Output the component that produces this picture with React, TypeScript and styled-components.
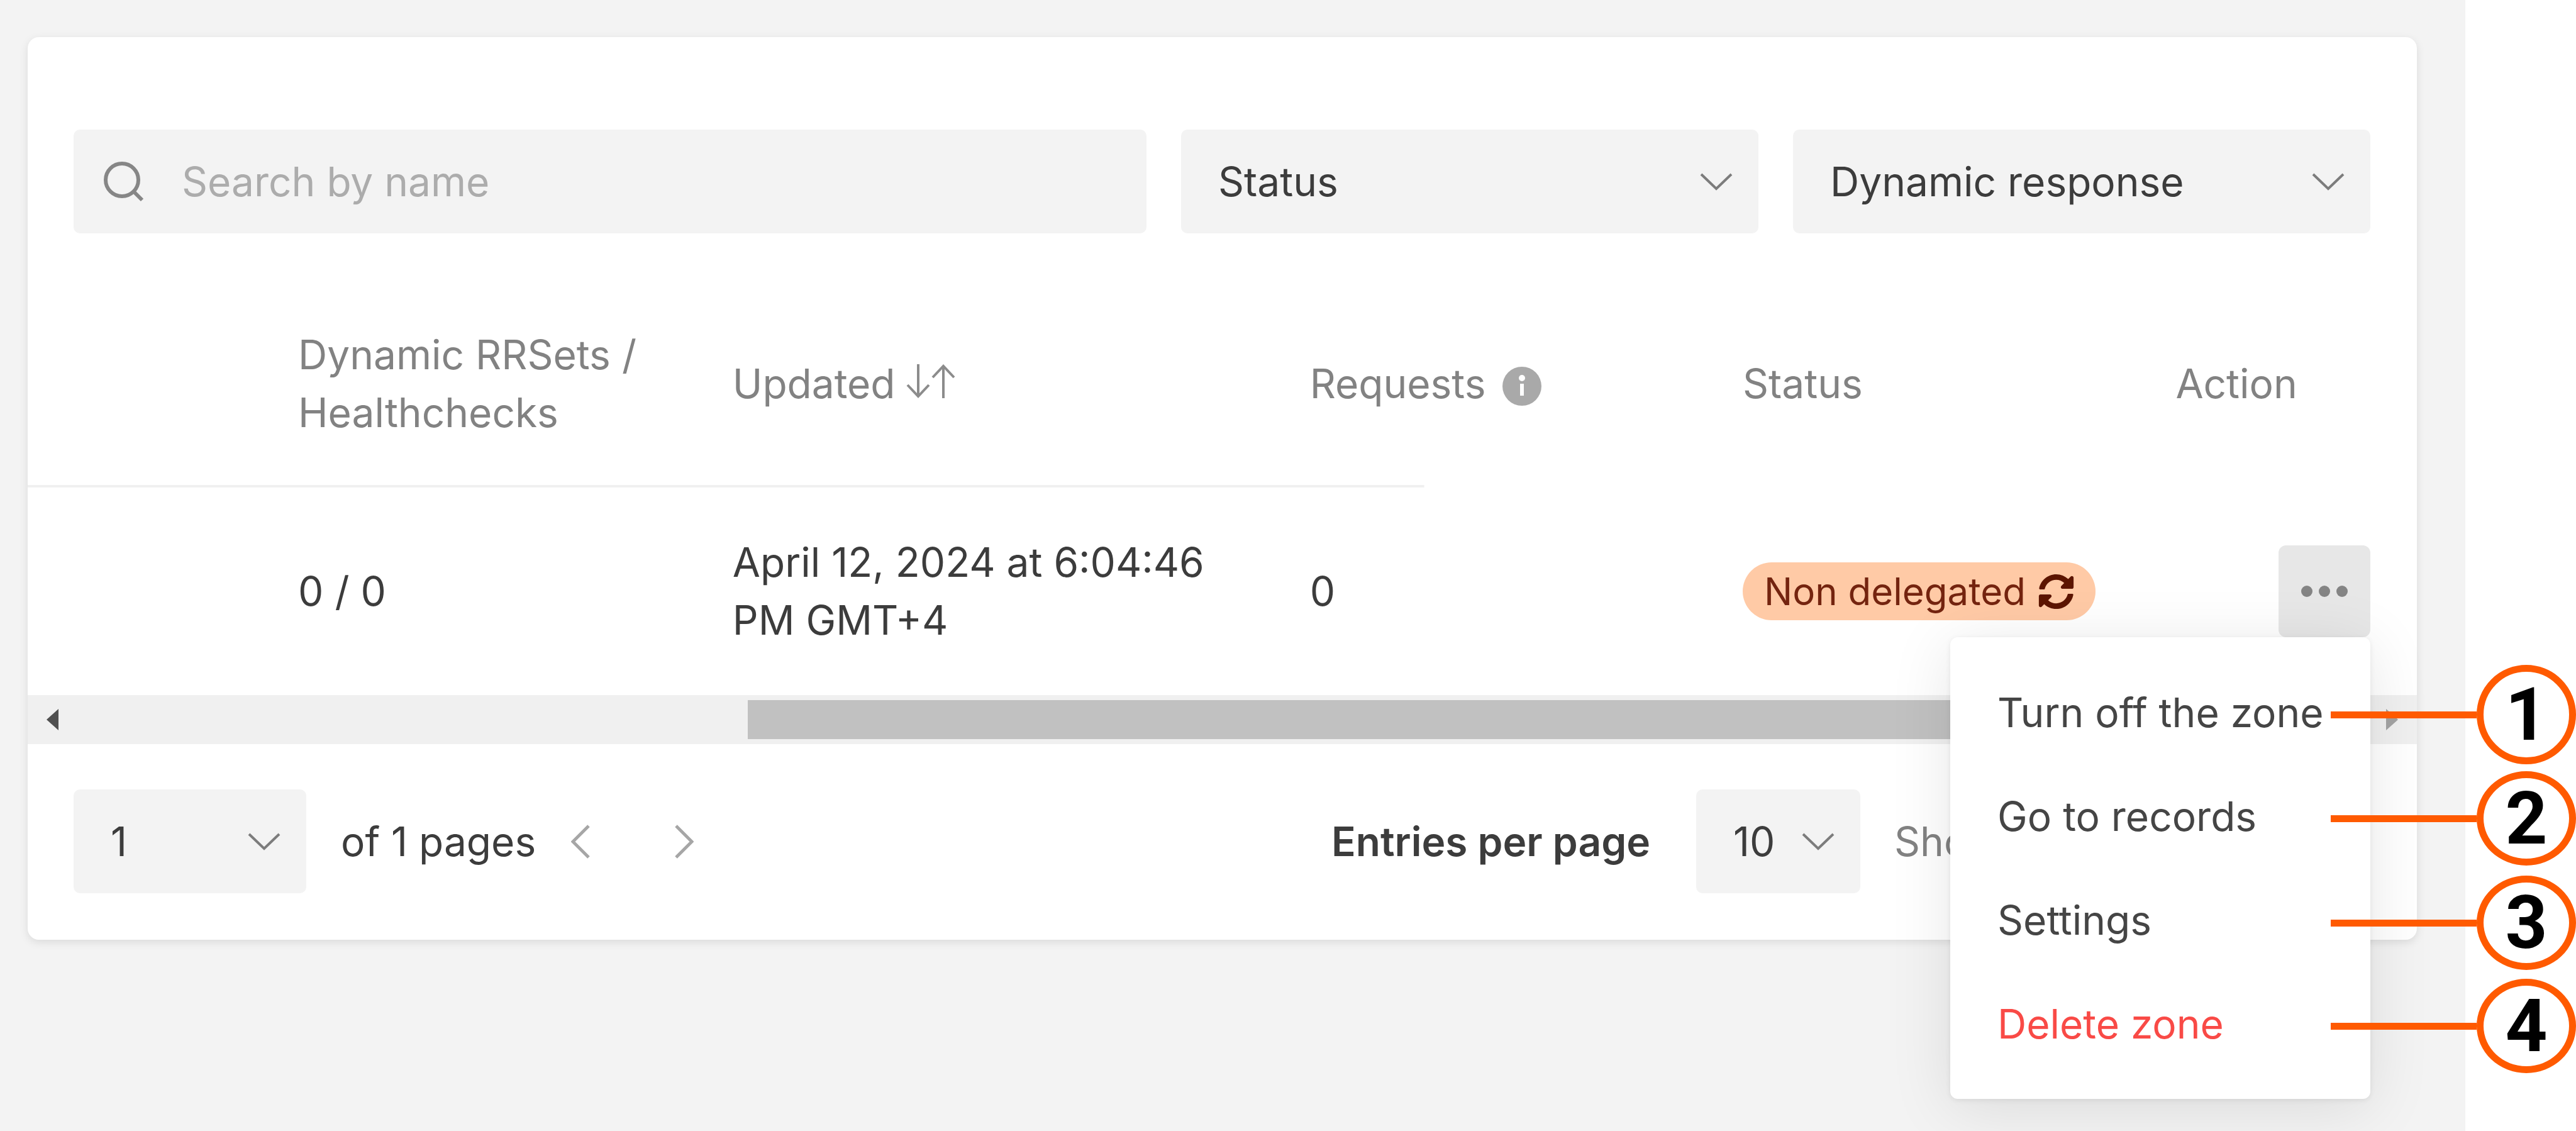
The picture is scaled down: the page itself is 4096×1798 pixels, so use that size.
import React from "react";
import styled, { createGlobalStyle, css } from "styled-components";

const GlobalStyle = createGlobalStyle`
  *, *::before, *::after { box-sizing: border-box; }
  body { margin: 0; background: #fff; }
  body, button, input, select {
    font-family: Inter, "Liberation Sans", sans-serif;
    font-size: 64px;
    line-height: 92px;
    color: #3c3c3c;
  }
`;

const Page = styled.div`
  position: relative;
  min-height: 100vh;
  padding-right: 176px;
  overflow: hidden;
`;

const Workspace = styled.main`
  min-height: 100vh;
  padding: 59px 77px 59px 44px;
  background: #f3f3f3;
`;

const Card = styled.section`
  background: #fff;
  border-radius: 18px;
  box-shadow: 0 4px 14px rgba(0, 0, 0, 0.1);
`;

const Filters = styled.form`
  display: flex;
  gap: 55px;
  padding: 147px 74px 74px 73px;
`;

const SearchBox = styled.label`
  display: flex;
  flex: 1;
  align-items: center;
  gap: 60px;
  height: 165px;
  padding: 0 48px;
  border-radius: 10px;
  background: #f3f3f3;
`;

const SearchInput = styled.input`
  flex: 1;
  min-width: 0;
  padding: 0;
  border: 0;
  outline: 0;
  background: transparent;
  &::placeholder { color: #acacac; opacity: 1; }
`;

const SelectBox = styled.div<{ $width: number }>`
  display: grid;
  flex: none;
  align-items: center;
  width: ${(p) => p.$width}px;
  height: 165px;
  border-radius: 10px;
  background: #f3f3f3;
  & > * { grid-area: 1 / 1; }
`;

const Select = styled.select`
  width: 100%;
  height: 100%;
  padding: 0 0 0 59px;
  border: 0;
  border-radius: 10px;
  appearance: none;
  background: transparent;
`;

const SelectArrow = styled.svg`
  justify-self: end;
  width: 52px;
  height: 28px;
  margin-right: 41px;
  pointer-events: none;
`;

const Table = styled.table`
  width: 100%;
  border-collapse: collapse;
  table-layout: fixed;
`;

const Column = styled.col<{ $share: string }>`
  width: ${(p) => p.$share};
`;

const HeadRow = styled.tr`
  height: 330px;
  background: linear-gradient(#f0f0f0, #f0f0f0) left bottom / 58.44% 4px no-repeat;
`;

const BodyRow = styled.tr`
  height: 330px;
`;

const cell = css<{ $first?: boolean }>`
  padding: 0 0 0 ${(p) => (p.$first ? 430 : 70)}px;
  text-align: left;
  vertical-align: middle;
`;

const HeadCell = styled.th<{ $first?: boolean }>`
  ${cell}
  color: #828282;
  font-weight: 400;
`;

const Cell = styled.td<{ $first?: boolean }>`
  ${cell}
`;

const ActionCell = styled(Cell)`
  padding-right: 74px;
`;

const HeadLabel = styled.span<{ $gap: number }>`
  display: flex;
  align-items: center;
  gap: ${(p) => p.$gap}px;
`;

const SortButton = styled.button`
  display: flex;
  padding: 0 0 8px;
  border: 0;
  background: none;
`;

const InfoMark = styled.svg`
  width: 64px;
  height: 64px;
  margin-top: 8px;
`;

const Badge = styled.span`
  display: flex;
  align-items: center;
  gap: 20px;
  width: max-content;
  height: 92px;
  padding: 0 34px;
  border-radius: 46px;
  background: #ffcaa6;
  color: #74240f;
  font-size: 60px;
`;

const ActionMenu = styled.div`
  position: relative;
  width: 146px;
  margin-left: auto;
`;

const MoreButton = styled.button`
  display: flex;
  align-items: center;
  justify-content: center;
  width: 146px;
  height: 146px;
  padding: 0;
  border: 0;
  border-radius: 12px;
  background: #e7e7e7;
`;

const Menu = styled.div`
  position: absolute;
  z-index: 2;
  top: 100%;
  right: 0;
  display: flex;
  flex-direction: column;
  width: 668px;
  padding: 37px 0;
  border-radius: 12px;
  background: #fff;
  box-shadow: 0 14px 100px rgba(0, 0, 0, 0.1), 0 2px 8px rgba(0, 0, 0, 0.08);
`;

const MenuItem = styled.button<{ $danger?: boolean }>`
  height: 165px;
  padding: 0 0 0 75px;
  border: 0;
  background: none;
  color: ${(p) => (p.$danger ? "#f94a46" : "#454545")};
  text-align: left;
  white-space: nowrap;
`;

const ScrollBar = styled.div`
  display: flex;
  align-items: center;
  justify-content: space-between;
  height: 78px;
  padding: 0 30px;
  background: #f0f0f0;
`;

const ScrollTrack = styled.div`
  display: flex;
  flex: 1;
  justify-content: flex-end;
  margin: 0 36px;
`;

const ScrollThumb = styled.div`
  width: 70.8%;
  height: 62px;
  background: #c1c1c1;
`;

const Pager = styled.footer`
  display: flex;
  align-items: center;
  padding: 72px 74px 74px 73px;
`;

const PageCount = styled.span`
  margin-left: 55px;
  white-space: nowrap;
`;

const PageArrows = styled.span`
  display: flex;
  gap: 135px;
  margin-left: 56px;
`;

const ArrowButton = styled.button`
  display: flex;
  padding: 0;
  border: 0;
  background: none;
`;

const EntriesLabel = styled.label`
  margin: 0 73px 0 auto;
  font-weight: 600;
  white-space: nowrap;
`;

const Summary = styled.span`
  flex: none;
  width: 757px;
  margin-left: 54px;
  color: #828282;
  white-space: nowrap;
`;

const Callout = styled.div<{ $top: number; $height: number }>`
  position: absolute;
  z-index: 3;
  top: ${(p) => p.$top}px;
  right: 0;
  display: flex;
  align-items: center;
  height: ${(p) => p.$height}px;
`;

const Leader = styled.span`
  width: 232px;
  height: 11px;
  background: #ff5a00;
`;

const Marker = styled.span`
  display: flex;
  align-items: center;
  justify-content: center;
  width: 158px;
  height: 100%;
  border: 11px solid #ff5a00;
  border-radius: 50%;
  background: #fff;
  color: #000;
  font: 700 117px/1 Roboto, "Liberation Sans", sans-serif;
`;

const SearchIcon = () => (
  <svg width="64" height="64" viewBox="0 0 64 64" fill="none" stroke="#868686" strokeWidth="6">
    <circle cx="29" cy="29" r="26" />
    <path d="M47 47 61 61" />
  </svg>
);

const SortIcon = () => (
  <svg width="80" height="54" viewBox="0 0 80 54" fill="none" stroke="#8c8c8c" strokeWidth="4">
    <path d="M20 0V50M3 33 20 51 37 33M60 54V4M43 21 60 3 77 21" />
  </svg>
);

const InfoIcon = () => (
  <InfoMark viewBox="0 0 64 64">
    <circle cx="32" cy="32" r="31" fill="#a9a9a9" />
    <circle cx="32" cy="19" r="5" fill="#fff" />
    <rect x="29" y="28" width="6" height="19" fill="#fff" />
  </InfoMark>
);

const SyncIcon = () => (
  <svg width="57" height="57" viewBox="0 0 512 512" fill="#5c1500">
    <path d="M370.7 133.3C339.5 104 298.9 88 255.8 88c-77.5.1-144.3 53.2-162.8 126.9-1.3 5.4-6.1 9.1-11.7 9.1H24.1c-7.5 0-13.2-6.8-11.8-14.2C33.9 94.9 134.8 8 256 8c66.4 0 126.8 26.1 171.3 68.7L463 41c15.1-15.1 41-4.4 41 17v134c0 13.3-10.7 24-24 24H346c-21.4 0-32.1-25.9-17-41l41.7-41.7zM32 296h134c21.4 0 32.1 25.9 17 41l-41.8 41.8c31.3 29.3 71.8 45.3 114.9 45.2 77.4-.1 144.3-53.1 162.8-126.8 1.3-5.4 6.1-9.1 11.7-9.1h57.3c7.5 0 13.2 6.8 11.8 14.2C478.1 417.1 377.2 504 256 504c-66.4 0-126.8-26.1-171.3-68.7L49 471c-15.1 15.1-41 4.4-41-17V320c0-13.3 10.7-24 24-24z" />
  </svg>
);

const MoreIcon = () => (
  <svg width="76" height="20" viewBox="0 0 76 20" fill="#848484">
    <circle cx="10" cy="10" r="9" />
    <circle cx="38" cy="10" r="9" />
    <circle cx="66" cy="10" r="9" />
  </svg>
);

const Chevron = () => (
  <SelectArrow viewBox="0 0 52 28" fill="none" stroke="#7c7c7c" strokeWidth="4">
    <path d="M2 2 26 25 50 2" />
  </SelectArrow>
);

const PageArrow = ({ forward }: { forward?: boolean }) => (
  <svg width="30" height="54" viewBox="0 0 30 54" fill="none" stroke="#a6a6a6" strokeWidth="5">
    <path d={forward ? "M2 2 27 27 2 52" : "M28 2 3 27 28 52"} />
  </svg>
);

const ScrollArrow = ({ forward }: { forward?: boolean }) => (
  <svg width="19" height="34" viewBox="0 0 19 34">
    <path d={forward ? "M0 0 19 17 0 34Z" : "M19 0 0 17 19 34Z"} fill={forward ? "#a3a3a3" : "#505050"} />
  </svg>
);

type DropDownProps = { id: string; label?: string; value: string; width: number };

const DropDown = ({ id, label, value, width }: DropDownProps) => (
  <SelectBox $width={width}>
    <Select id={id} aria-label={label} defaultValue={value}>
      <option>{value}</option>
    </Select>
    <Chevron />
  </SelectBox>
);

const callouts = [
  { number: 1, top: 1057, height: 158 },
  { number: 2, top: 1226, height: 150 },
  { number: 3, top: 1392, height: 150 },
  { number: 4, top: 1556, height: 150 },
];

export default function App() {
  return (
    <Page>
      <GlobalStyle />
      <Workspace>
        <Card>
          <Filters>
            <SearchBox htmlFor="search">
              <SearchIcon />
              <SearchInput id="search" type="text" aria-label="Search by name" placeholder="Search by name" />
            </SearchBox>
            <DropDown id="status" label="Status" value="Status" width={918} />
            <DropDown id="response" label="Dynamic response" value="Dynamic response" width={918} />
          </Filters>
          <Table>
            <colgroup>
              <Column $share="27.66%" />
              <Column $share="24.16%" />
              <Column $share="18.12%" />
              <Column $share="18.12%" />
              <Column $share="11.94%" />
            </colgroup>
            <thead>
              <HeadRow>
                <HeadCell $first>
                  Dynamic RRSets /<br />
                  Healthchecks
                </HeadCell>
                <HeadCell>
                  <HeadLabel $gap={16}>
                    Updated
                    <SortButton type="button" aria-label="Sort by update time">
                      <SortIcon />
                    </SortButton>
                  </HeadLabel>
                </HeadCell>
                <HeadCell>
                  <HeadLabel $gap={26}>
                    Requests
                    <InfoIcon />
                  </HeadLabel>
                </HeadCell>
                <HeadCell>Status</HeadCell>
                <HeadCell>Action</HeadCell>
              </HeadRow>
            </thead>
            <tbody>
              <BodyRow>
                <Cell $first>0 / 0</Cell>
                <Cell>
                  April 12, 2024 at 6:04:46
                  <br />
                  PM GMT+4
                </Cell>
                <Cell>0</Cell>
                <Cell>
                  <Badge>
                    Non delegated
                    <SyncIcon />
                  </Badge>
                </Cell>
                <ActionCell>
                  <ActionMenu>
                    <MoreButton type="button" aria-label="Zone actions">
                      <MoreIcon />
                    </MoreButton>
                    <Menu>
                      <MenuItem type="button">Turn off the zone</MenuItem>
                      <MenuItem type="button">Go to records</MenuItem>
                      <MenuItem type="button">Settings</MenuItem>
                      <MenuItem type="button" $danger>Delete zone</MenuItem>
                    </Menu>
                  </ActionMenu>
                </ActionCell>
              </BodyRow>
            </tbody>
          </Table>
          <ScrollBar>
            <ScrollArrow />
            <ScrollTrack>
              <ScrollThumb />
            </ScrollTrack>
            <ScrollArrow forward />
          </ScrollBar>
          <Pager>
            <DropDown id="page" label="Page" value="1" width={370} />
            <PageCount>of 1 pages</PageCount>
            <PageArrows>
              <ArrowButton type="button" aria-label="Previous page">
                <PageArrow />
              </ArrowButton>
              <ArrowButton type="button" aria-label="Next page">
                <PageArrow forward />
              </ArrowButton>
            </PageArrows>
            <EntriesLabel htmlFor="entries">Entries per page</EntriesLabel>
            <DropDown id="entries" value="10" width={261} />
            <Summary>Show</Summary>
          </Pager>
        </Card>
      </Workspace>
      {callouts.map((c) => (
        <Callout key={c.number} $top={c.top} $height={c.height}>
          <Leader />
          <Marker>{c.number}</Marker>
        </Callout>
      ))}
    </Page>
  );
}
